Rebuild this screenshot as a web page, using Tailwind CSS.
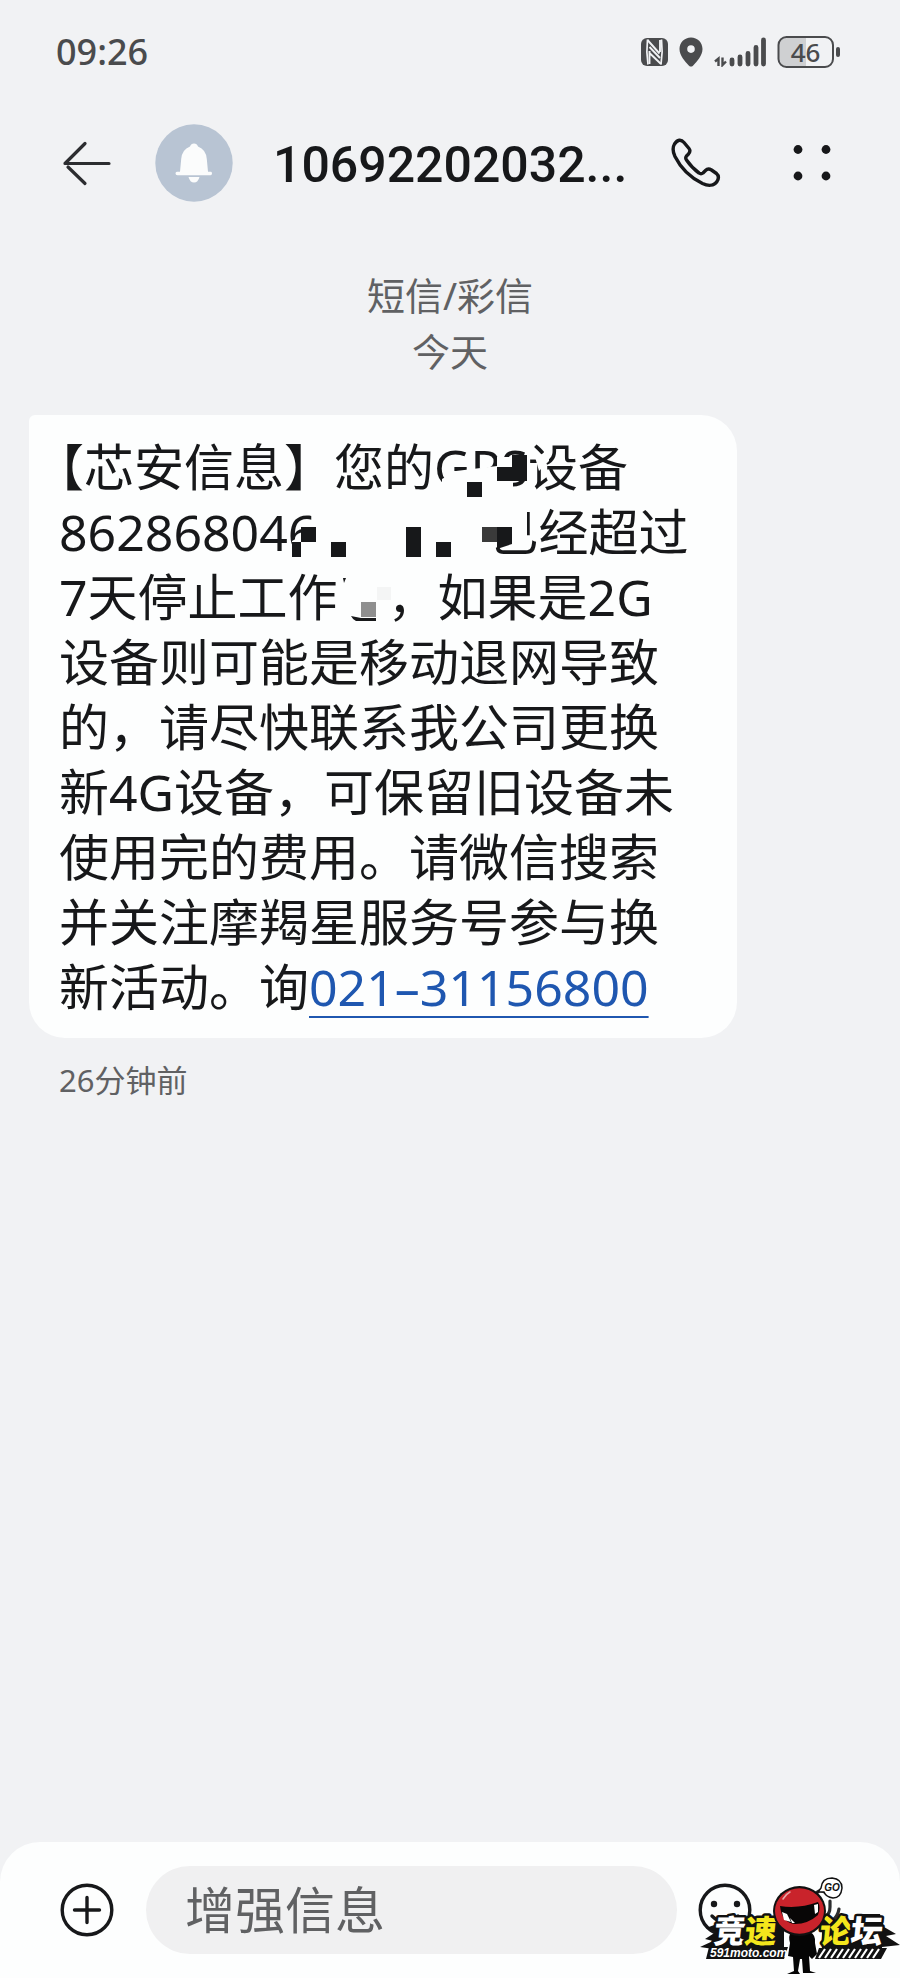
<!DOCTYPE html>
<html lang="zh-CN">
<head>
  <meta charset="UTF-8" />
  <meta name="viewport" content="width=device-width, initial-scale=1.0" />
  <title>短信/彩信</title>
  <script src="https://cdn.jsdelivr.net/npm/@tailwindcss/browser@4"></script>
</head>
<body class="min-h-screen flex flex-col bg-[#f1f2f4] text-[#17181a] font-['Noto_Sans','Noto_Sans_CJK_SC',sans-serif]">

  <!-- Status bar -->
  <div class="flex items-center justify-between h-[104px] pl-[56px] pr-[59px] text-[#4a4b4d]">
    <span class="text-[36px] leading-[44px] font-medium">09:26</span>
    <div class="flex items-center gap-[11px]">
      <svg class="w-[27px] h-[28px]" viewBox="0 0 27 28" fill="currentColor">
        <rect x="0" y="0" width="27" height="28" rx="6" />
        <path d="M6.500 1.500Q5 14 7 26.500M20.500 1.500Q22 14 20 26.500" fill="none" stroke="#f1f2f4" stroke-width="1.700" />
        <path d="M6.500 2L18.500 15.500M8.500 9L19 20M8.500 15L20 26M19 2V14M8.500 13V26" fill="none" stroke="#f1f2f4" stroke-width="1.900" />
      </svg>
      <svg class="w-[24px] h-[30px]" viewBox="0 0 24 30" fill="currentColor">
        <path fill-rule="evenodd" d="M12 0.500C5.500 0.500 0.500 5.500 0.500 12C0.500 18.500 6 24.500 10 28.700Q12 30.500 14 28.700C18 24.500 23.500 18.500 23.500 12C23.500 5.500 18.500 0.500 12 0.500ZM12 8.300A3.800 3.800 0 1 1 12 15.900A3.800 3.800 0 0 1 12 8.300Z" />
      </svg>
      <svg class="w-[52px] h-[30px]" viewBox="0 0 52 30" fill="none" stroke="currentColor" stroke-linecap="round">
        <path d="M4.500 29V21.500L1 24.500M8.500 20.500V28L12 24.500" stroke-width="2.400" stroke-linecap="butt" />
        <path d="M18 23V27M26 20V27M34 16.500V27M42 10.500V27M49.500 3V27" stroke-width="4.800" />
      </svg>
      <svg class="w-[64px] h-[32px]" viewBox="0 0 64 32">
        <path d="M29 2H10Q2 2 2 10V22Q2 30 10 30H29Z" fill="#cfd0d2" />
        <rect x="1.500" y="1" width="54.500" height="30" rx="8" fill="none" stroke="currentColor" stroke-width="2" />
        <rect x="59" y="11" width="4" height="10" rx="2" fill="currentColor" />
        <text x="28.500" y="25.500" text-anchor="middle" font-size="26" font-weight="500" fill="currentColor">46</text>
      </svg>
    </div>
  </div>

  <!-- Conversation header -->
  <header class="flex items-center h-[118px] pl-[59px] pr-[60px]">
    <button type="button" aria-label="返回" class="w-[54px] shrink-0">
      <svg class="w-[54px] h-[54px]" viewBox="0 0 54 54" fill="none" stroke="#2c2d30" stroke-width="3.200" stroke-linecap="round" stroke-linejoin="round">
        <path d="M50 27.500H6L26 7.500M9 31L26 47.500" />
      </svg>
    </button>
    <svg class="w-[78px] h-[78px] ml-[42px] shrink-0" viewBox="0 0 78 78">
      <circle cx="39" cy="39" r="38.700" fill="#b8c4d3" />
      <path d="M39 19.500Q42 19.500 43 22.500Q51 25.500 51.800 35L53 47.800H56Q57 48 57 49.500Q57 51.300 55.500 51.300H22.500Q20.500 51.300 20.500 49.500Q20.500 48 22 47.800H25L26.200 35Q27 25.500 35 22.500Q36 19.500 39 19.500Z" fill="#fbfcfc" />
      <path d="M33.500 53H44.500Q43 58.500 39 58.500Q35 58.500 33.500 53Z" fill="#fbfcfc" />
    </svg>
    <h1 class="flex-1 min-w-0 ml-10 mr-8 pt-[3px] text-[50px] leading-[64px] font-medium whitespace-nowrap font-['Roboto','Noto_Sans_CJK_SC',sans-serif]">10692202032...</h1>
    <button type="button" aria-label="拨打电话" class="shrink-0">
      <svg class="w-[54px] h-[54px]" viewBox="0 0 54 54" fill="none" stroke="#17181a" stroke-width="3.400" stroke-linejoin="round">
        <path d="M6.500 8C9.500 3.500 13 3 16 6.500L21 12.500Q23 15 20.500 18L18.500 20Q17 22 18.500 24Q24 32 31 37Q33 38.500 35 37L37.500 34.500Q40 32 43.500 34L48.500 37.500Q52 40.500 49 45.500C46 50 40 50 34.500 47.500Q16 38.500 7 20.500Q3.500 13 6.500 8Z" />
      </svg>
    </button>
    <button type="button" aria-label="更多" class="ml-[62px] shrink-0">
      <svg class="w-[56px] h-[54px]" viewBox="0 0 56 54" fill="#17181a">
        <circle cx="14" cy="13.500" r="4.400" />
        <circle cx="42" cy="13.500" r="4.400" />
        <circle cx="14" cy="40" r="4.400" />
        <circle cx="42" cy="40" r="4.400" />
      </svg>
    </button>
  </header>

  <!-- Messages -->
  <main class="flex-1 px-[29px] pt-[45px]">
    <div class="text-center text-[38px] leading-[56px] text-[#606163]">
      <p>短信/彩信</p>
      <p>今天</p>
    </div>

    <div class="relative mt-9 max-w-[708px] bg-[#fdfefe] rounded-[36px] rounded-tl-[6px] pl-[30px] pr-10 pt-5 pb-[18px]">
      <p class="text-[50px] leading-[65px] [text-spacing-trim:trim-start]">【芯安信息】您的GPS设备862868046<span class="inline-block w-[172px]"></span>已经超过7天停止工作<span class="inline-block w-[50px]"></span>，如果是2G设备则可能是移动退网导致的，请尽快联系我公司更换新4G设备，可保留旧设备未使用完的费用。请微信搜索并关注摩羯星服务号参与换新活动。询<a href="tel:02131156800" class="whitespace-nowrap text-[#1f57b0] underline decoration-2 underline-offset-[10px]">021–31156800</a></p>

      <!-- Mosaic over the private parts -->
      <svg class="absolute left-0 top-0 w-[708px] h-[220px]" viewBox="0 0 708 220" fill="#17181a">
        <path d="M413 64L427 56L468 51V42H484V90H413Z" fill="#fdfefe" />
        <path d="M468 52H483V40H498V66H468Z" />
        <rect x="438" y="67" width="15" height="15" />
        <path d="M506 42L520 36V46L510 56Z" fill="#fdfefe" />
        <path d="M270 122L276 111L281 107H300V146H263V126Z" fill="#fdfefe" />
        <rect x="272" y="112" width="15" height="15" />
        <rect x="263" y="127" width="9" height="15" />
        <rect x="302" y="127" width="15" height="15" />
        <rect x="377" y="112" width="15" height="30" />
        <rect x="407" y="127" width="15" height="15" />
        <path d="M463 92H498V125L480 131L463 133Z" fill="#fdfefe" />
        <rect x="453" y="112" width="15" height="15" fill="#3a3a3a" />
        <path d="M468 112H483V129L468 134Z" />
        <path d="M314 163H317L315 168Z" />
        <path d="M322 201L332 203H347V206H327Q324 205 322 201Z" />
        <rect x="348" y="172" width="14" height="13" fill="#f4f5f5" />
        <rect x="332" y="187" width="15" height="15" fill="#8f8f8f" />
      </svg>
    </div>

    <p class="mt-5 pl-[30px] text-[31px] leading-[44px] text-[#606163]">26分钟前</p>
  </main>

  <!-- Message input -->
  <footer class="relative flex items-center h-[136px] bg-[#fdfefe] rounded-t-[40px] pl-[60px] pr-[45px]">
    <button type="button" aria-label="添加" class="shrink-0">
      <svg class="w-[54px] h-[54px]" viewBox="0 0 54 54" fill="none" stroke="#17181a" stroke-width="3.400" stroke-linecap="round">
        <circle cx="27" cy="27" r="24.800" />
        <path d="M27 14.500V39.500M14.500 27H39.500" />
      </svg>
    </button>
    <input type="text" aria-label="增强信息" placeholder="增强信息" class="flex-1 min-w-0 h-[88px] ml-8 mr-5 px-[39px] rounded-full bg-[#f0f0f1] text-[50px] placeholder:text-[#606163] outline-none" />
    <div class="flex justify-between w-[158px] shrink-0">
      <button type="button" aria-label="表情">
        <svg class="w-[56px] h-[54px]" viewBox="0 0 56 54">
          <circle cx="28" cy="27" r="24.800" fill="none" stroke="#17181a" stroke-width="3.400" />
          <circle cx="17" cy="21" r="3.200" fill="#17181a" />
          <circle cx="40" cy="21" r="3.200" fill="#17181a" />
          <path d="M15 33Q28 46 41 33" fill="none" stroke="#17181a" stroke-width="3.400" stroke-linecap="round" />
        </svg>
      </button>
      <button type="button" aria-label="语音">
        <svg class="w-[54px] h-[54px]" viewBox="0 0 54 54" fill="none" stroke="#2c2d30" stroke-width="3.200" stroke-linecap="round">
          <path d="M13 14Q17 4 25 10M29 18V24Q29 31 24 34M38 26Q37 33 31 38" />
        </svg>
      </button>
    </div>

    <!-- Forum badge -->
    <svg class="absolute right-0 bottom-0 w-[200px] h-[104px]" viewBox="0 0 200 104">
      <path d="M17 44H84V76H20L0 73L13 67L5 65L16 58L6 54L17 50Z" fill="#111" />
      <path d="M122 46H162V40H180L184 53L196 60L186 62L200 71L182 73V76H122Z" fill="#111" />
      <g font-family="'Noto Sans CJK SC', sans-serif" font-weight="900" font-size="32" stroke-linejoin="round" paint-order="stroke" transform="skewX(-6)">
        <text x="20" y="69" fill="#fff" stroke="#111" stroke-width="5">竞</text>
        <text x="51" y="69" fill="#f4e61c" stroke="#111" stroke-width="5">速</text>
        <text x="126" y="69" fill="#f4e61c" stroke="#111" stroke-width="5">论</text>
        <text x="157" y="69" fill="#fff" stroke="#111" stroke-width="5">坛</text>
      </g>
      <path d="M9 73H88L84 85H6Z" fill="#111" />
      <text x="10" y="83" font-family="'Liberation Sans', sans-serif" font-weight="700" font-style="italic" font-size="12" fill="#fff">591moto.com</text>
      <path d="M119 74H187L181 85H115Z" fill="#111" />
      <path d="M119 84L125 75M125 84L131 75M131 84L137 75M137 84L143 75M143 84L149 75M149 84L155 75M155 84L161 75M161 84L167 75M167 84L173 75M173 84L179 75" stroke="#fff" stroke-width="2.200" />
      <path d="M90 57H112Q119 62 118 76L113 87H110L90 85Q88 66 90 57Z" fill="#fff" />
      <path d="M91 58H110Q116 61 115 69L117 80L112 85L109 82L110 97L116 99H103L102 85H100L98 97L100 100H87L94 97L93 83L88 82L90 69Q88 62 91 58Z" fill="#050505" />
      <ellipse cx="99.500" cy="37" rx="26.500" ry="25" fill="#111" />
      <ellipse cx="99.500" cy="37" rx="24.500" ry="22.800" fill="#c9232b" />
      <path d="M80 32Q99 35 118 28Q121 33 118 41Q108 50 95 50Q82 49 80 32Z" fill="#080606" />
      <path d="M82 38L87 40L91 48L84 46ZM90 44L95 49H92Z" fill="#fff" />
      <path d="M114 31L118 30L118 38L115 40Z" fill="#fff" />
      <path d="M83 25Q86 20 90 18" fill="none" stroke="#e7a6a6" stroke-width="1.500" stroke-linecap="round" />
      <path d="M121 14Q122 4 132 4Q142 5 142 14Q141 24 133 24Q126 23 124 18L118 18Z" fill="#fff" stroke="#111" stroke-width="1.500" />
      <text x="132" y="17" text-anchor="middle" font-family="'Liberation Sans', sans-serif" font-weight="700" font-style="italic" font-size="10" fill="#111">GO</text>
    </svg>
  </footer>
</body>
</html>
